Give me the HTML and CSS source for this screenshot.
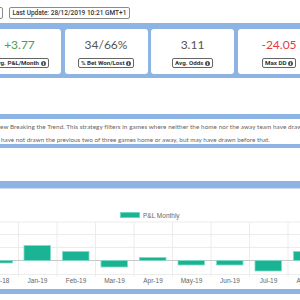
FILE: index.html
```html
<!DOCTYPE html>
<html lang="en">
<head>
    <meta charset="UTF-8">
    <title>Strategy - Breaking the Trend</title>
    <link rel="stylesheet" href="styles.css">
</head>
<body>
    <div class="topbar">
        <div class="tag tag-cut"></div>
        <div class="tag">Last Update: 28/12/2019 10:21 GMT+1</div>
    </div>

    <div class="stats">
        <div class="card">
            <div class="value green">+3.77</div>
            <div class="label">Avg. P&amp;L/Month <svg class="info" viewBox="0 0 6 6"><circle cx="3" cy="3" r="3"/><rect x="2.5" y="2.5" width="1" height="2.3"/><rect x="2.5" y="1.1" width="1" height="0.9"/></svg></div>
        </div>
        <div class="card">
            <div class="value">34/66%</div>
            <div class="label">% Bet Won/Lost <svg class="info" viewBox="0 0 6 6"><circle cx="3" cy="3" r="3"/><rect x="2.5" y="2.5" width="1" height="2.3"/><rect x="2.5" y="1.1" width="1" height="0.9"/></svg></div>
        </div>
        <div class="card">
            <div class="value">3.11</div>
            <div class="label">Avg. Odds <svg class="info" viewBox="0 0 6 6"><circle cx="3" cy="3" r="3"/><rect x="2.5" y="2.5" width="1" height="2.3"/><rect x="2.5" y="1.1" width="1" height="0.9"/></svg></div>
        </div>
        <div class="card">
            <div class="value red">-24.05</div>
            <div class="label">Max DD <svg class="info" viewBox="0 0 6 6"><circle cx="3" cy="3" r="3"/><rect x="2.5" y="2.5" width="1" height="2.3"/><rect x="2.5" y="1.1" width="1" height="0.9"/></svg></div>
        </div>
    </div>

    <div class="desc">
        <div class="desc-body">
            <p class="first">ew Breaking the Trend. This strategy filters in games where neither the home nor the away team have drawn</p>
            <p>have not drawn the previous two of three games home or away, but may have drawn before that.</p>
        </div>
    </div>

    <div class="chart">
        <svg class="plot" viewBox="0 0 300 101" width="300" height="101">
            <rect class="swatch" x="120.5" y="24.5" width="19" height="5"/>
            <text class="legend" x="143" y="30">P&amp;L Monthly</text>

            <g class="grid">
                <line x1="0" y1="34" x2="300" y2="34"/>
                <line x1="0" y1="46.5" x2="300" y2="46.5"/>
                <line x1="0" y1="59.5" x2="300" y2="59.5"/>
                <line x1="0" y1="86.5" x2="300" y2="86.5"/>
                <line x1="18.5" y1="34" x2="18.5" y2="89"/>
                <line x1="57" y1="34" x2="57" y2="89"/>
                <line x1="95.5" y1="34" x2="95.5" y2="89"/>
                <line x1="134" y1="34" x2="134" y2="89"/>
                <line x1="172.5" y1="34" x2="172.5" y2="89"/>
                <line x1="211" y1="34" x2="211" y2="89"/>
                <line x1="249.5" y1="34" x2="249.5" y2="89"/>
                <line x1="288" y1="34" x2="288" y2="89"/>
            </g>
            <line class="zero" x1="0" y1="72.5" x2="300" y2="72.5"/>

            <g class="bars">
                <rect x="-14" y="72.5" width="26.5" height="2.5"/>
                <rect x="24" y="57.5" width="26.5" height="15"/>
                <rect x="62.5" y="63.5" width="26.5" height="9"/>
                <rect x="101" y="72.5" width="26.5" height="6.5"/>
                <rect x="139.5" y="69.5" width="26.5" height="3"/>
                <rect x="178" y="72.5" width="26.5" height="4.5"/>
                <rect x="216.5" y="72.5" width="26.5" height="4.5"/>
                <rect x="255" y="72.5" width="26.5" height="10.5"/>
                <rect x="293.5" y="63.5" width="26.5" height="9"/>
            </g>

            <g class="axis">
                <text x="-1" y="95">Dec-18</text>
                <text x="37.5" y="95">Jan-19</text>
                <text x="76" y="95">Feb-19</text>
                <text x="114.5" y="95">Mar-19</text>
                <text x="153" y="95">Apr-19</text>
                <text x="191.5" y="95">May-19</text>
                <text x="230" y="95">Jun-19</text>
                <text x="268.5" y="95">Jul-19</text>
                <text x="307" y="95">Aug-19</text>
            </g>
        </svg>
    </div>
</body>
</html>
```

FILE: styles.css
```css
body {
    margin: 0;
    width: 300px;
    height: 300px;
    overflow: hidden;
    background: #fff;
    font-family: Lato, "Open Sans", sans-serif;
}
.topbar {
    display: flex;
    gap: 6px;
    height: 23px;
    padding-top: 7px;
    box-sizing: border-box;
}
.tag {
    height: 12px;
    box-sizing: border-box;
    border: 1px solid #8a8a8a;
    border-radius: 2px;
    padding: 0 2.5px;
    font-family: Roboto, sans-serif;
    font-size: 6.5px;
    font-weight: 500;
    line-height: 10px;
    color: #333;
}
.tag-cut {
    width: 40px;
    margin-left: -37px;
}
.stats {
    display: flex;
    gap: 3.5px;
    height: 55px;
    box-sizing: border-box;
    padding: 6px 0 4px;
    margin-left: -22px;
    background: #8db4e2;
}
.card {
    flex: 0 0 83px;
    background: #fff;
    border-radius: 3px;
    display: flex;
    flex-direction: column;
    align-items: center;
    padding-top: 9px;
    box-sizing: border-box;
}
.value {
    font-size: 12px;
    line-height: 14px;
    color: #555;
}
.green {
    color: #4a9e55;
}
.red {
    color: #e63946;
}
.label {
    margin-top: 6px;
    display: flex;
    align-items: center;
    gap: 1.5px;
    height: 10px;
    box-sizing: border-box;
    border: 1px solid #666;
    border-radius: 2px;
    padding: 0 2px;
    font-family: Roboto, sans-serif;
    font-weight: 700;
    font-size: 6.2px;
    color: #333;
}
.info {
    width: 5px;
    height: 5px;
}
.info circle {
    fill: #555;
}
.info rect {
    fill: #fff;
}
.desc {
    margin-top: 36px;
    background: #8db4e2;
    padding: 5px 0 4px;
}
.desc-body {
    background: #fff;
    height: 25px;
    padding-top: 2px;
    box-sizing: border-box;
}
.desc-body p {
    margin: 0;
    white-space: nowrap;
    font-size: 6.35px;
    line-height: 12.5px;
    color: #666;
}
.desc-body .first {
    letter-spacing: 0.06px;
}
.desc-body p:last-child {
    padding-left: 1px;
}
.chart {
    margin-top: 33px;
    border-top: 7px solid #8db4e2;
    border-bottom: 5px solid #8db4e2;
    box-shadow: inset 0 1px 0 #c9dcf2;
}
.plot {
    display: block;
    font-family: "Liberation Sans", Arial, sans-serif;
}
.swatch {
    fill: #1ab394;
    stroke: #6fd6c0;
    stroke-width: 1;
}
.legend {
    font-size: 6.5px;
    fill: #666;
}
.grid line {
    stroke: #ececec;
    stroke-width: 1;
}
.zero {
    stroke: #c8c8c8;
    stroke-width: 1;
}
.bars rect {
    fill: #1ab394;
    stroke: #7ddcc7;
    stroke-width: 0.8;
}
.axis text {
    font-size: 6.5px;
    fill: #666;
    text-anchor: middle;
}
```
